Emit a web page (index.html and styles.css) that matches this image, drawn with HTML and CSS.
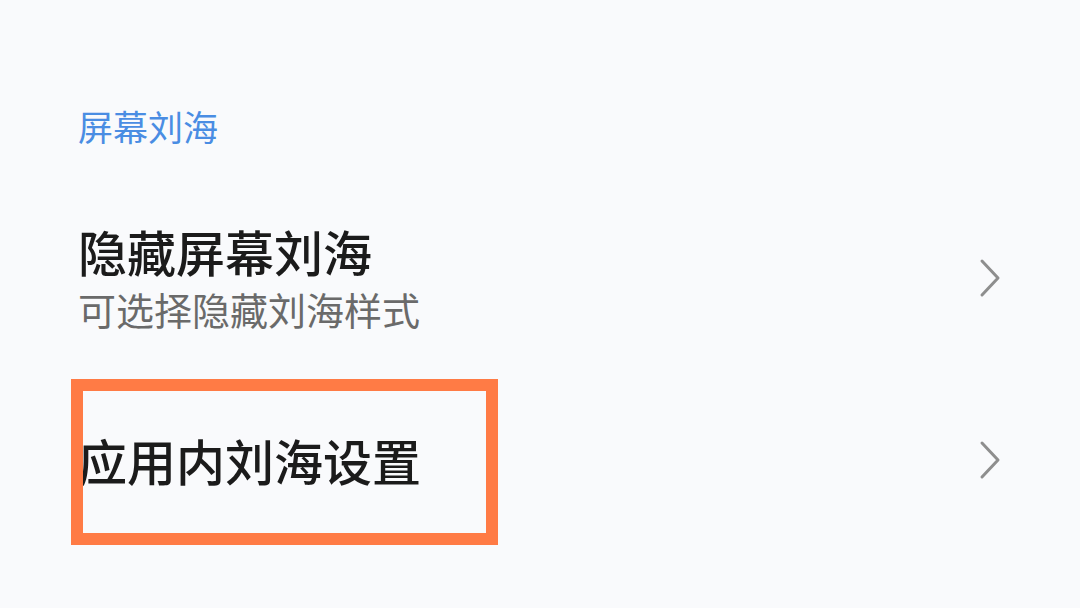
FILE: index.html
```html
<!DOCTYPE html>
<html lang="zh-CN">
<head>
    <meta charset="UTF-8">
    <meta name="viewport" content="width=device-width, initial-scale=1.0">
    <title>屏幕刘海</title>
    <link rel="stylesheet" href="styles.css">
</head>
<body>
    <div class="page">
        <div class="section-title">屏幕刘海</div>

        <div class="item item-first">
            <div class="item-text">
                <div class="item-title">隐藏屏幕刘海</div>
                <div class="item-sub">可选择隐藏刘海样式</div>
            </div>
            <svg class="chevron" width="22" height="40" viewBox="0 0 22 40">
                <polyline points="3,3 19,20 3,37" fill="none" stroke="#8e8e8e" stroke-width="3" stroke-linecap="round" stroke-linejoin="round"/>
            </svg>
        </div>

        <div class="item item-second">
            <div class="item-text">
                <div class="item-title">应用内刘海设置</div>
            </div>
            <svg class="chevron" width="22" height="40" viewBox="0 0 22 40">
                <polyline points="3,3 19,20 3,37" fill="none" stroke="#8e8e8e" stroke-width="3" stroke-linecap="round" stroke-linejoin="round"/>
            </svg>
            <div class="highlight"></div>
        </div>
    </div>
</body>
</html>
```

FILE: styles.css
```css
html, body {
    height: 100%;
}
body {
    margin: 0;
    padding: 0;
    background: #f9fafc;
    font-family: "Noto Sans CJK SC", "Noto Sans", sans-serif;
    color: #1b1b1b;
}
.page {
    box-sizing: border-box;
    min-height: 608px;
    padding: 106px 79px 0 78px;
}
.section-title {
    font-size: 35px;
    line-height: 40px;
    color: #4a8de3;
}
.item {
    display: flex;
    align-items: center;
    justify-content: space-between;
    position: relative;
}
.item-first {
    padding-top: 74px;
}
.item-second {
    padding-top: 93px;
}
.item-title {
    font-size: 49px;
    line-height: 62px;
    font-weight: 500;
    color: #1b1b1b;
}
.item-sub {
    font-size: 38px;
    line-height: 54px;
    color: #6a6a6a;
}
.chevron {
    display: block;
}
.highlight {
    position: absolute;
    left: -7px;
    top: 43px;
    width: 403px;
    height: 142px;
    border: 12px solid #ff7b45;
}
```
